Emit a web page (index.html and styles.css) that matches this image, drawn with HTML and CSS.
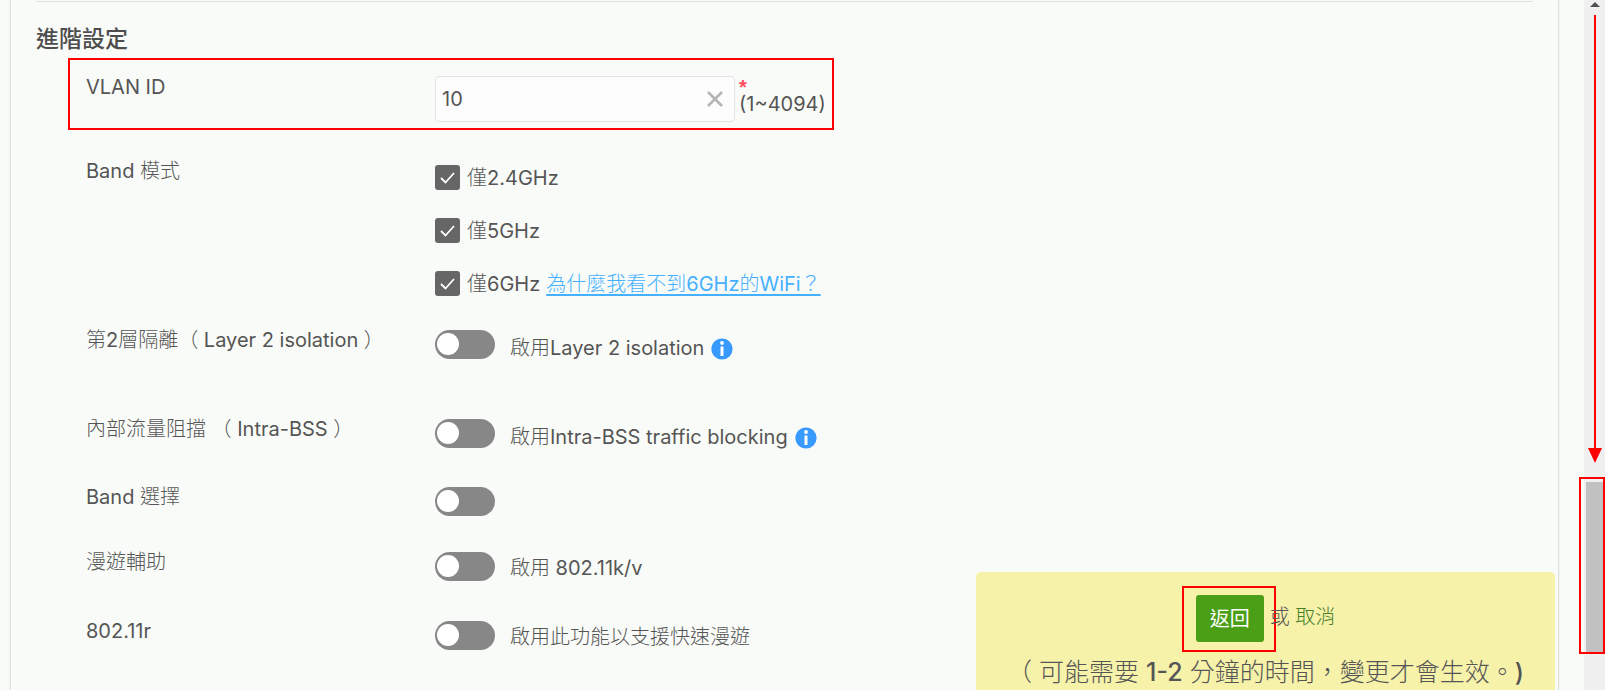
FILE: index.html
```html
<!DOCTYPE html>
<html lang="zh-Hant">
<head>
    <meta charset="UTF-8">
    <meta name="viewport" content="width=device-width, initial-scale=1.0">
    <title>進階設定</title>
    <link rel="stylesheet" href="styles.css">
</head>
<body>
    <div class="page">
        <main class="panel">
            <hr class="divider">
            <h2 class="section-title">進階設定</h2>

            <form class="settings">
                <div class="row highlight vlan-row">
                    <label class="row-label" for="vlan">VLAN ID</label>
                    <div class="vlan-field">
                        <div class="input-box">
                            <input type="text" id="vlan" value="10">
                            <button type="button" class="clear-btn" aria-label="清除">
                                <svg width="16" height="16" viewBox="0 0 16 16"><path d="M1 1L15 15M15 1L1 15" stroke="#b5b5b5" stroke-width="2.6" fill="none"/></svg>
                            </button>
                        </div>
                        <div class="hint">
                            <span class="required">*</span>
                            <span class="range">(1~4094)</span>
                        </div>
                    </div>
                </div>

                <div class="row band-row">
                    <span class="row-label">Band 模式</span>
                    <div class="checks">
                        <div class="check">
                            <input type="checkbox" id="band24" checked>
                            <label for="band24">僅2.4GHz</label>
                        </div>
                        <div class="check">
                            <input type="checkbox" id="band5" checked>
                            <label for="band5">僅5GHz</label>
                        </div>
                        <div class="check">
                            <input type="checkbox" id="band6" checked>
                            <label for="band6">僅6GHz</label>
                            <a href="#">為什麼我看不到6GHz的WiFi？</a>
                        </div>
                    </div>
                </div>

                <div class="row row-tall">
                    <label class="row-label" for="layer2">第2層隔離（ Layer 2 isolation ）</label>
                    <div class="control has-info">
                        <input type="checkbox" class="switch" id="layer2">
                        <label for="layer2">啟用Layer 2 isolation</label>
                        <svg class="info" width="22" height="22" viewBox="0 0 22 22"><circle cx="11" cy="11" r="10.6" fill="#3899ff"/><circle cx="11" cy="5" r="1.9" fill="#fff"/><path d="M11 8.5V18" stroke="#fff" stroke-width="3"/></svg>
                    </div>
                </div>

                <div class="row">
                    <label class="row-label" for="intra">內部流量阻擋 （ Intra-BSS ）</label>
                    <div class="control has-info">
                        <input type="checkbox" class="switch" id="intra">
                        <label for="intra">啟用Intra-BSS traffic blocking</label>
                        <svg class="info" width="22" height="22" viewBox="0 0 22 22"><circle cx="11" cy="11" r="10.6" fill="#3899ff"/><circle cx="11" cy="5" r="1.9" fill="#fff"/><path d="M11 8.5V18" stroke="#fff" stroke-width="3"/></svg>
                    </div>
                </div>

                <div class="row row-short">
                    <label class="row-label" for="bandselect">Band 選擇</label>
                    <div class="control">
                        <input type="checkbox" class="switch" id="bandselect">
                    </div>
                </div>

                <div class="row row-medium">
                    <label class="row-label" for="roaming">漫遊輔助</label>
                    <div class="control">
                        <input type="checkbox" class="switch" id="roaming">
                        <label for="roaming">啟用 802.11k/v</label>
                    </div>
                </div>

                <div class="row">
                    <label class="row-label" for="dot11r">802.11r</label>
                    <div class="control">
                        <input type="checkbox" class="switch" id="dot11r">
                        <label for="dot11r">啟用此功能以支援快速漫遊</label>
                    </div>
                </div>
            </form>
        </main>

        <div class="scrollbar">
            <svg class="scroll-up" width="10" height="5" viewBox="0 0 10 5"><path d="M0 5L5 0L10 5Z" fill="#505050"/></svg>
            <svg class="scroll-arrow" width="14" height="448" viewBox="0 0 14 448"><path d="M7 0V434" stroke="#f00" stroke-width="2"/><path d="M0 433H14L7 448Z" fill="#f00"/></svg>
            <div class="thumb highlight"></div>
        </div>

        <!-- Save bar, floats over the form -->
        <div class="save-bar">
            <div class="save-actions">
                <div class="highlight save-frame">
                    <button type="button" class="save-btn">返回</button>
                </div>
                <span class="save-or">或 <a href="#">取消</a></span>
            </div>
            <p class="save-note">（ 可能需要 <b>1-2</b> 分鐘的時間，變更才會生效。<b>)</b></p>
        </div>
    </div>
</body>
</html>
```

FILE: styles.css
```css
* {
    box-sizing: border-box;
}
body {
    margin: 0;
    background: #f9fbf8;
    color: #555;
    font-family: Inter, "Noto Sans CJK TC Light", "Noto Sans CJK TC", sans-serif;
    font-size: 20px;
    font-weight: 400;
    line-height: 22px;
}
input, button {
    font: inherit;
    color: inherit;
}
.page {
    display: flex;
    position: relative;
    height: 100vh;
    overflow: hidden;
    padding-left: 10px;
}
.panel {
    flex: 1;
    margin-right: 25px;
    padding: 1px 25px 0;
    border-left: 1px solid #e0e2e0;
    border-right: 1px solid #e0e2e0;
    box-shadow: 0 0 2px rgba(0,0,0,0.1);
}
.divider {
    margin: 0;
    border: 0;
    border-top: 1px solid #e0e2e0;
}
.section-title {
    margin: 22px 0 4px;
    color: #4d4d4d;
    font-family: Inter, "Noto Sans CJK TC", sans-serif;
    font-size: 23px;
    font-weight: 500;
    line-height: 30px;
}
.settings {
    padding-left: 32px;
}
.highlight {
    border: 2px solid #f00;
}

/* Rows */
.row {
    display: grid;
    grid-template-columns: 349px 1fr;
    min-height: 68px;
    padding-left: 18px;
}
.row-tall {
    min-height: 89px;
}
.row-medium {
    min-height: 69px;
}
.row-short {
    min-height: 65px;
}
.vlan-row {
    width: fit-content;
    padding: 16px 6px 6px 16px;
    margin-bottom: 30px;
}
.band-row {
    padding-bottom: 33px;
}

.vlan-field {
    display: flex;
    gap: 4px;
}
.input-box {
    display: flex;
    align-items: center;
    width: 300px;
    height: 46px;
    padding: 0 11px 0 6px;
    background: #fdfdfd;
    border: 1px solid #e2e4e2;
    border-radius: 4px;
}
.input-box input {
    flex: 1;
    min-width: 0;
    padding: 0;
    border: 0;
    outline: 0;
    background: transparent;
}
.clear-btn {
    display: flex;
    padding: 0;
    border: 0;
    background: none;
}
.hint {
    display: flex;
    flex-direction: column;
}
.required {
    padding-top: 3px;
    color: #ff4d5e;
    font-family: "Liberation Sans", sans-serif;
    font-weight: 700;
    line-height: 16px;
}
.range {
    line-height: 18px;
}

.checks {
    display: flex;
    flex-direction: column;
    gap: 28px;
    padding-top: 5px;
}
.check {
    display: flex;
    align-items: center;
    height: 25px;
}
.check input {
    appearance: none;
    width: 25px;
    height: 25px;
    margin: 0 7px 0 0;
    border-radius: 3px;
    background: #666 url("data:image/svg+xml,%3Csvg xmlns='http://www.w3.org/2000/svg' viewBox='0 0 25 25'%3E%3Cpath d='M6 13L10.5 17.5L19 8' stroke='white' stroke-width='1.8' fill='none'/%3E%3C/svg%3E");
}
.check a {
    margin-left: 6px;
    color: #45b0ff;
    text-decoration-thickness: 2px;
    text-underline-offset: 3px;
}

.control {
    display: flex;
    align-items: flex-start;
    padding-top: 1px;
}
.control label {
    padding-top: 5px;
}
.has-info label {
    padding-top: 7px;
}
.switch {
    appearance: none;
    width: 60px;
    height: 29px;
    margin: 0 15px 0 0;
    padding: 3px 2px;
    border-radius: 15px;
    background: #878787;
}
.switch::before {
    content: "";
    display: block;
    width: 22px;
    height: 22px;
    border-radius: 50%;
    background: #fff;
}
.switch:checked {
    padding-left: 36px;
    background: #4a9f17;
}
.info {
    margin: 8px 0 0 7px;
}

/* Scrollbar */
.scrollbar {
    display: flex;
    flex-direction: column;
    align-items: center;
    width: 21px;
    padding-top: 2px;
    background: #f0f0f0;
}
.scroll-arrow {
    margin: 8px 0 14px;
}
.thumb {
    align-self: flex-end;
    width: 26px;
    height: 177px;
    padding: 3px 0 0 5px;
}
.thumb::before {
    content: "";
    display: block;
    height: 100%;
    background: #c1c1c1;
}

/* Save bar */
.save-bar {
    position: absolute;
    right: 50px;
    bottom: 0;
    width: 579px;
    height: 118px;
    padding: 14px 20px 0;
    border-radius: 5px 5px 0 0;
    background: #f7f2aa;
    text-align: center;
}
.save-actions {
    display: flex;
    justify-content: center;
    padding-right: 14px;
}
.save-frame {
    padding: 7px 10px 8px 12px;
}
.save-btn {
    display: block;
    width: 68px;
    height: 47px;
    padding: 0;
    border: 0;
    border-radius: 3px;
    background: #4a9f17;
    color: #fff;
    font-family: Inter, "Noto Sans CJK TC", sans-serif;
}
.save-or {
    margin-left: -6px;
    padding-top: 20px;
}
.save-or a {
    color: #4b7f2c;
    text-decoration: none;
}
.save-note {
    margin: 4px 0 0;
    font-size: 25px;
    line-height: 32px;
    white-space: nowrap;
}
.save-note b {
    font-weight: 500;
}
```
